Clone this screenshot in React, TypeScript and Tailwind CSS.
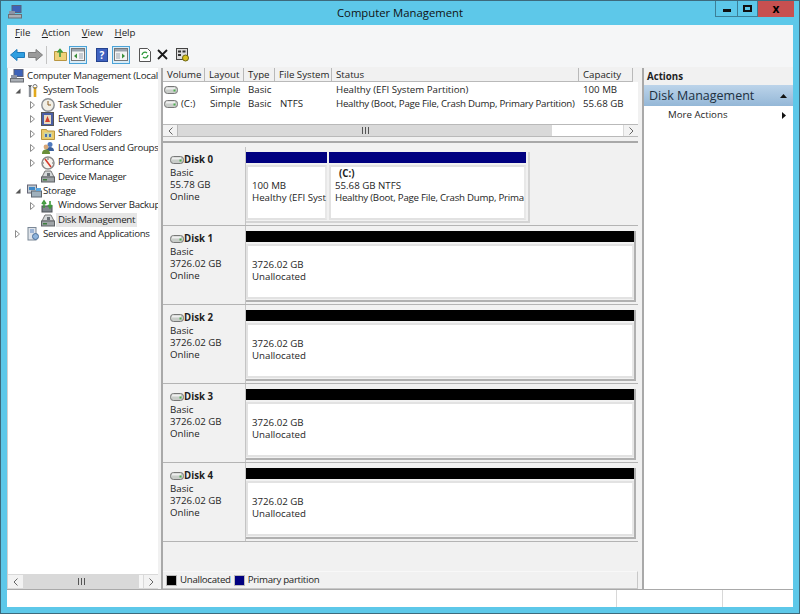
import type { ReactNode } from "react";

const TREE = [
  { label: "System Tools", level: 1, arrow: "open", icon: "tools" },
  { label: "Task Scheduler", level: 2, arrow: "closed", icon: "clock" },
  { label: "Event Viewer", level: 2, arrow: "closed", icon: "event" },
  { label: "Shared Folders", level: 2, arrow: "closed", icon: "folder" },
  { label: "Local Users and Groups", level: 2, arrow: "closed", icon: "users" },
  { label: "Performance", level: 2, arrow: "closed", icon: "perf" },
  { label: "Device Manager", level: 2, arrow: "", icon: "device" },
  { label: "Storage", level: 1, arrow: "open", icon: "storage" },
  { label: "Windows Server Backup", level: 2, arrow: "closed", icon: "backup" },
  { label: "Disk Management", level: 2, arrow: "", icon: "device", selected: true },
  { label: "Services and Applications", level: 1, arrow: "closed", icon: "services" },
];

const COLUMNS = [
  { label: "Volume", w: "w-[42px]" },
  { label: "Layout", w: "w-[39px]" },
  { label: "Type", w: "w-[31px]" },
  { label: "File System", w: "w-[57px]" },
  { label: "Status", w: "w-[247px]" },
  { label: "Capacity", w: "w-[54px]" },
];

const VOLUMES = [
  { name: "", layout: "Simple", type: "Basic", fs: "", status: "Healthy (EFI System Partition)", statusClass: "", capacity: "100 MB" },
  { name: "(C:)", layout: "Simple", type: "Basic", fs: "NTFS", status: "Healthy (Boot, Page File, Crash Dump, Primary Partition)", statusClass: "tracking-[-0.24px]", capacity: "55.68 GB" },
];

function DiskIcon() {
  return (
    <svg width="14" height="8" viewBox="0 0 14 8" className="shrink-0">
      <rect x="0.5" y="0.5" width="13" height="7" rx="3" fill="#c9cdc9" stroke="#777" />
      <rect x="2" y="1.5" width="9" height="2" fill="#eee" />
      <rect x="9.5" y="3.5" width="2" height="2" fill="#4caf50" />
    </svg>
  );
}

function TreeIcon({ name }: { name: string }) {
  const box = "shrink-0";
  if (name === "computer")
    return (
      <svg width="15" height="14" viewBox="0 0 15 14" className={box}>
        <rect x="4" y="0.5" width="9" height="7" fill="#3d62b8" stroke="#59617a" />
        <rect x="1" y="6" width="6" height="3" fill="#8b93a6" />
        <rect x="0.5" y="9.5" width="13" height="3.5" fill="#a9aeb5" stroke="#6b6f75" />
      </svg>
    );
  if (name === "tools")
    return (
      <svg width="12" height="14" viewBox="0 0 12 14" className={box}>
        <path d="M3 1v12" stroke="#8a8f96" strokeWidth="2.4" />
        <path d="M1.5 1l1.5 2 1.5-2" stroke="#555" fill="none" />
        <path d="M8 3v10" stroke="#e2a91c" strokeWidth="2.6" />
        <circle cx="8" cy="2.5" r="2" fill="none" stroke="#777" />
      </svg>
    );
  if (name === "clock")
    return (
      <svg width="14" height="14" viewBox="0 0 14 14" className={box}>
        <circle cx="7" cy="7" r="6.2" fill="#f1efe6" stroke="#8b8f94" strokeWidth="1.4" />
        <path d="M7 3v4h3" stroke="#8a5a20" fill="none" />
      </svg>
    );
  if (name === "event")
    return (
      <svg width="13" height="14" viewBox="0 0 13 14" className={box}>
        <rect x="0.5" y="0.5" width="12" height="13" fill="#4b5fa5" stroke="#555" />
        <rect x="3" y="3" width="7" height="9" fill="#e9dcc0" />
        <path d="M6.5 4l2.5 6h-5z" fill="#d6402b" />
      </svg>
    );
  if (name === "folder")
    return (
      <svg width="14" height="13" viewBox="0 0 14 13" className={box}>
        <path d="M0.5 2.5h5l1 1.5h7v8.5h-13z" fill="#eccb6b" stroke="#b8963f" />
        <rect x="3" y="5.5" width="8" height="5" fill="#c9d6a8" />
        <rect x="4" y="7" width="2" height="3" fill="#4a6fb0" />
        <rect x="8" y="7" width="2" height="3" fill="#4a6fb0" />
      </svg>
    );
  if (name === "users")
    return (
      <svg width="14" height="14" viewBox="0 0 14 14" className={box}>
        <circle cx="9" cy="3.5" r="2.5" fill="#4e79bd" />
        <path d="M5 10c0-3 2-4 4-4s4 1 4 4z" fill="#3a5f9a" />
        <circle cx="5" cy="6" r="2.4" fill="#d8a878" />
        <path d="M1 13c0-3.5 2-4.5 4-4.5s4 1 4 4.5z" fill="#6a8f3a" />
      </svg>
    );
  if (name === "perf")
    return (
      <svg width="14" height="14" viewBox="0 0 14 14" className={box}>
        <circle cx="7" cy="7" r="6" fill="#f7f4ee" stroke="#8a8a8a" strokeWidth="1.5" />
        <path d="M4 3l6 8" stroke="#d63a2b" strokeWidth="1.6" />
        <path d="M7 2v2M3 7H2M12 7h-1" stroke="#666" />
      </svg>
    );
  if (name === "device")
    return (
      <svg width="14" height="13" viewBox="0 0 14 13" className={box}>
        <path d="M4 1h6l3 6H1z" fill="#d5d8d9" stroke="#777" />
        <rect x="0.5" y="7" width="13" height="5" fill="#9ea3a6" stroke="#5d6165" />
        <rect x="2" y="9" width="4" height="1.5" fill="#3c7d3c" />
        <path d="M6 3h3v3H6z" fill="#6a7076" />
      </svg>
    );
  if (name === "storage")
    return (
      <svg width="15" height="14" viewBox="0 0 15 14" className={box}>
        <rect x="0.5" y="1" width="9" height="8" fill="#c2cbd2" stroke="#667" />
        <rect x="2" y="3" width="6" height="3" fill="#3f89c8" />
        <rect x="4.5" y="7" width="10" height="6" fill="#9fb0bc" stroke="#5c6670" />
        <rect x="9" y="4" width="5" height="3" fill="#5aa6de" />
      </svg>
    );
  if (name === "backup")
    return (
      <svg width="13" height="14" viewBox="0 0 13 14" className={box}>
        <rect x="1" y="7" width="10" height="6" fill="#7e858b" stroke="#4c5156" />
        <path d="M3 9V4M1 5l2-3 2 3" stroke="#3f9a3c" strokeWidth="1.6" fill="none" />
        <path d="M9 2v6M7 6l2 3 2-3" stroke="#3f9a3c" strokeWidth="1.6" fill="none" />
      </svg>
    );
  return (
    <svg width="13" height="14" viewBox="0 0 13 14" className={box}>
      <rect x="1" y="0.5" width="8" height="12.5" fill="#dfe4ea" stroke="#7a8796" />
      <path d="M3 3h4M3 5h4" stroke="#5b86c4" />
      <circle cx="8.5" cy="9.5" r="3" fill="#8fb4dc" stroke="#4c6f99" />
    </svg>
  );
}

function Arrow({ kind }: { kind: string }) {
  if (kind === "open")
    return (
      <svg width="6" height="6" viewBox="0 0 6 6" className="shrink-0">
        <path d="M5.5 0.5v5h-5z" fill="#555" />
      </svg>
    );
  if (kind === "closed")
    return (
      <svg width="5" height="8" viewBox="0 0 5 8" className="shrink-0">
        <path d="M0.5 0.5l4 3.5-4 3.5z" fill="#fff" stroke="#8c8c8c" />
      </svg>
    );
  return null;
}

function TreeRow({ item }: { item: (typeof TREE)[number] }) {
  return (
    <div className="flex h-[14.4px] items-center tracking-[-0.3px]">
      <div className={item.level === 1 ? "flex w-[19px] shrink-0 pl-[7px]" : "flex w-[33px] shrink-0 pl-[22px]"}>
        <Arrow kind={item.arrow} />
      </div>
      <div className={item.level === 1 ? "flex w-[15px] shrink-0 items-center" : "flex w-[16px] shrink-0 items-center"}>
        <TreeIcon name={item.icon} />
      </div>
      <span className={item.selected ? "-ml-[1px] whitespace-nowrap bg-[#e6e6e6] px-[2px]" : "whitespace-nowrap pl-[1px]"}>
        {item.label}
      </span>
    </div>
  );
}

function ScrollBtn({ dir, className = "" }: { dir: "l" | "r"; className?: string }) {
  return (
    <div className={`flex h-full w-[15px] shrink-0 items-center justify-center bg-[#f2f2f2] ${className}`}>
      <svg width="5" height="8" viewBox="0 0 5 8">
        <path d={dir === "l" ? "M4.5 0.5L1 4l3.5 3.5" : "M0.5 0.5L4 4 0.5 7.5"} fill="none" stroke="#666" />
      </svg>
    </div>
  );
}

function Grip() {
  return (
    <div className="flex gap-[1px]">
      <div className="h-[7px] w-[1px] bg-[#555]" />
      <div className="ml-[1px] h-[7px] w-[1px] bg-[#555]" />
      <div className="ml-[1px] h-[7px] w-[1px] bg-[#555]" />
    </div>
  );
}

function Partition({ width, color, children }: { width: string; color: string; children: ReactNode }) {
  return (
    <div className={`flex h-full flex-col ${width}`}>
      <div className={`h-[11px] shrink-0 ${color}`} />
      <div className="mt-[2px] flex flex-1 flex-col justify-end border-2 border-[#e2e2e2] border-r-[#e8e8e8] bg-white pb-[14px] pl-[4px] leading-[12px]">
        {children}
      </div>
    </div>
  );
}

function DiskRow({ name, size, children }: { name: string; size: string; children: ReactNode }) {
  return (
    <div className="flex h-[79px] shrink-0 border-b border-[#b4b4b4]">
      <div className="w-[83px] shrink-0 border-r border-[#c4c4c4] pl-[7px] pt-[7px] leading-[12px]">
        <div className="flex items-center font-bold">
          <DiskIcon />
          <span>{name}</span>
        </div>
        <div className="mt-[1px]">Basic</div>
        <div>{size}</div>
        <div>Online</div>
      </div>
      <div className="flex-1 pb-[2px] pt-[5px]">{children}</div>
    </div>
  );
}

function UnallocatedDisk({ name }: { name: string }) {
  return (
    <DiskRow name={name} size="3726.02 GB">
      <div className="h-full w-[390px] border-b-2 border-r-2 border-[#b0b0b0] pb-[1px]">
        <Partition width="w-full" color="bg-black">
          <div>3726.02 GB</div>
          <div>Unallocated</div>
        </Partition>
      </div>
    </DiskRow>
  );
}

function ToolBtn({ children, active, className = "" }: { children: ReactNode; active?: boolean; className?: string }) {
  return (
    <div
      className={`flex h-[18px] shrink-0 items-center justify-center ${
        active ? "w-[18px] border border-[#4aa3d8] bg-[#d9ecf7]" : ""
      } ${className}`}
    >
      {children}
    </div>
  );
}

function PaneGlyph({ side }: { side: "l" | "r" }) {
  return (
    <svg width="14" height="13" viewBox="0 0 14 13">
      <rect x="0.5" y="0.5" width="13" height="12" fill="#f4f4f4" stroke="#777" />
      <rect x="1" y="1" width="12" height="2.5" fill="#9aa3ad" />
      <rect x={side === "l" ? 8 : 2} y="5" width="4" height="6" fill="#c5cbd1" />
      <path d={side === "l" ? "M6 5.5v5L3 8z" : "M8 5.5v5L11 8z"} fill="#3a8f3a" />
    </svg>
  );
}

export default function App() {
  return (
    <div className="flex h-[614px] w-[800px] flex-col overflow-hidden border border-[#3d6a7c] bg-[#5dc8e9] text-[9.7px] text-[#1e1e1e] [font-family:'Open_Sans',sans-serif]">
      {/* title bar */}
      <div className="flex h-[24px] shrink-0">
        <div className="w-[84px] pl-[7px] pt-[4px]">
          <TreeIcon name="computer" />
        </div>
        <div className="flex-1 pt-[4px] text-center text-[11.3px] text-[#111]">Computer Management</div>
        <div className="flex h-[16px] w-[84px]">
          <div className="flex w-[22px] items-center justify-center border border-t-0 border-r-0 border-[#3c7f96]">
            <div className="mt-[3px] h-[3px] w-[8px] bg-[#111]" />
          </div>
          <div className="flex w-[21px] items-center justify-center border border-t-0 border-[#3c7f96]">
            <div className="h-[7px] w-[9px] border-2 border-[#111]" />
          </div>
          <div className="flex w-[36px] items-center justify-center bg-[#c75050] text-[12px] font-bold leading-none text-black">x</div>
        </div>
      </div>

      <div className="mx-[6px] mb-[6px] flex min-h-0 flex-1 flex-col bg-[#f1f1f1]">
        {/* menu */}
        <div className="flex h-[17px] shrink-0 items-center gap-[11.5px] bg-[#f5f6f7] pl-[8px]">
          {["File", "Action", "View", "Help"].map((m) => (
            <span key={m}>
              <span className="underline">{m[0]}</span>
              {m.slice(1)}
            </span>
          ))}
        </div>

        {/* toolbar */}
        <div className="flex h-[25px] shrink-0 items-center bg-[#f5f6f7] pl-[3px]">
          <ToolBtn>
            <svg width="15" height="12" viewBox="0 0 15 12">
              <path d="M7 0.5L0.5 6 7 11.5V8.5h7.5v-5H7z" fill="#2f9fe0" stroke="#1f78b8" />
            </svg>
          </ToolBtn>
          <ToolBtn className="ml-[3px]">
            <svg width="15" height="12" viewBox="0 0 15 12">
              <path d="M8 0.5L14.5 6 8 11.5V8.5H0.5v-5H8z" fill="#9a9a9a" stroke="#7e7e7e" />
            </svg>
          </ToolBtn>
          <div className="ml-[3px] h-[18px] w-[1px] bg-[#c4c4c4]" />
          <ToolBtn className="ml-[7px]">
            <svg width="13" height="13" viewBox="0 0 13 13">
              <path d="M0.5 3.5h4l1 1h7v8h-12z" fill="#efd27a" stroke="#b99640" />
              <path d="M6 9V3M3.5 4.5L6 1.5l2.5 3" stroke="#3c9a3c" strokeWidth="1.6" fill="none" />
            </svg>
          </ToolBtn>
          <ToolBtn active className="ml-[2px]">
            <PaneGlyph side="l" />
          </ToolBtn>
          <ToolBtn className="ml-[9px]">
            <div className="flex h-[14px] w-[12px] items-center justify-center border border-[#24438f] bg-[#3f62c0] text-[10px] font-bold leading-none text-white">?</div>
          </ToolBtn>
          <ToolBtn active className="ml-[4px]">
            <PaneGlyph side="r" />
          </ToolBtn>
          <ToolBtn className="ml-[9px]">
            <svg width="12" height="14" viewBox="0 0 12 14">
              <path d="M0.5 0.5h8l3 3v10h-11z" fill="#fff" stroke="#555" />
              <path d="M3 7a3 3 0 0 1 5-2M9 7a3 3 0 0 1-5 2" stroke="#2f9a3c" strokeWidth="1.3" fill="none" />
            </svg>
          </ToolBtn>
          <ToolBtn className="ml-[6px]">
            <svg width="11" height="11" viewBox="0 0 11 11">
              <path d="M1 1l9 9M10 1l-9 9" stroke="#1a1a1a" strokeWidth="1.8" />
            </svg>
          </ToolBtn>
          <ToolBtn className="ml-[8px]">
            <svg width="13" height="14" viewBox="0 0 13 14">
              <rect x="0.5" y="0.5" width="11" height="11" fill="#dcdcdc" stroke="#444" />
              <rect x="2" y="2.5" width="3" height="2" fill="#333" />
              <rect x="6.5" y="2.5" width="3" height="2" fill="#333" />
              <rect x="2" y="6" width="3" height="2" fill="#333" />
              <circle cx="9.5" cy="10" r="3" fill="#d9c21f" stroke="#6b6310" />
            </svg>
          </ToolBtn>
        </div>

        {/* panes */}
        <div className="mt-[1px] flex min-h-0 flex-1">
          {/* tree */}
          <div className="flex w-[151px] shrink-0 flex-col border-l border-[#d0d0d0] bg-white">
            <div className="min-h-0 flex-1 overflow-hidden pt-[1px]">
              <div className="flex h-[14.4px] items-center pl-[2px]">
                <TreeIcon name="computer" />
                <span className="whitespace-nowrap pl-[2px] tracking-[-0.22px]">Computer Management (Local</span>
              </div>
              {TREE.map((item) => (
                <TreeRow key={item.label} item={item} />
              ))}
            </div>
            <div className="flex h-[15px] shrink-0 border-y border-[#d9d9d9] bg-[#f5f5f5]">
              <ScrollBtn dir="l" />
              <div className="flex w-[116px] items-center justify-center bg-[#d9d9d9]">
                <Grip />
              </div>
              <div className="w-[4px]" />
              <ScrollBtn dir="r" className="border-l border-[#d9d9d9]" />
            </div>
          </div>

          {/* middle */}
          <div className="ml-[3px] flex w-[477px] shrink-0 flex-col border-l-2 border-[#a9a9a9]">
            <div className="flex h-[14px] shrink-0 bg-[#f1f1f1]">
              {COLUMNS.map((c) => (
                <div key={c.label} className={`${c.w} flex items-center whitespace-nowrap border-b border-r border-[#b9b9b9] pl-[4px] pt-[2px]`}>
                  {c.label}
                </div>
              ))}
            </div>
            <div className="h-[42px] shrink-0 bg-white pt-[1px]">
              {VOLUMES.map((v) => (
                <div key={v.status} className="flex h-[14px] items-center whitespace-nowrap">
                  <div className="flex w-[42px] items-center gap-[3px] pl-[1px]">
                    <DiskIcon />
                    <span>{v.name}</span>
                  </div>
                  <div className="w-[39px] pl-[5px]">{v.layout}</div>
                  <div className="w-[31px] pl-[4px]">{v.type}</div>
                  <div className="w-[57px] pl-[5px]">{v.fs}</div>
                  <div className={`w-[247px] pl-[4px] ${v.statusClass}`}>{v.status}</div>
                  <div className="w-[54px] pl-[4px]">{v.capacity}</div>
                </div>
              ))}
            </div>
            <div className="flex h-[13px] shrink-0 border-y border-[#b9b9b9] bg-white">
              <ScrollBtn dir="l" className="border-r border-[#b9b9b9]" />
              <div className="flex w-[374px] items-center justify-center bg-[#d9d9d9]">
                <Grip />
              </div>
              <div className="flex-1" />
              <ScrollBtn dir="r" className="border-l border-[#d9d9d9]" />
            </div>
            <div className="h-[6px] shrink-0 border-b-2 border-[#a9a9a9] bg-[#f1f1f1]" />

            <div className="flex min-h-0 flex-1 flex-col pt-[4px]">
              <DiskRow name="Disk 0" size="55.78 GB">
                <div className="flex h-full w-[284px] gap-[2px] border-b-2 border-r-2 border-[#d4d4d4] pb-[1px]">
                  <Partition width="w-[81px]" color="bg-[#000080]">
                    <div>100 MB</div>
                    <div className="whitespace-nowrap">Healthy (EFI Syst</div>
                  </Partition>
                  <Partition width="w-[197px]" color="bg-[#000080]">
                    <div className="pl-[4px] font-bold">(C:)</div>
                    <div>55.68 GB NTFS</div>
                    <div className="whitespace-nowrap tracking-[-0.24px]">Healthy (Boot, Page File, Crash Dump, Prima</div>
                  </Partition>
                </div>
              </DiskRow>
              <UnallocatedDisk name="Disk 1" />
              <UnallocatedDisk name="Disk 2" />
              <UnallocatedDisk name="Disk 3" />
              <UnallocatedDisk name="Disk 4" />
              <div className="flex-1" />
              <div className="flex h-[18px] shrink-0 items-center border-b border-r border-t border-[#c8c8c8] border-t-[#f8f8f8] pl-[4px] tracking-[-0.3px]">
                <div className="h-[9px] w-[9px] bg-black outline outline-1 outline-[#bbb]" />
                <span className="ml-[4px]">Unallocated</span>
                <div className="ml-[4px] h-[9px] w-[9px] bg-[#000080] outline outline-1 outline-[#bbb]" />
                <span className="ml-[4px]">Primary partition</span>
              </div>
            </div>
          </div>

          {/* actions */}
          <div className="ml-[4px] flex flex-1 flex-col border-l-2 border-[#a9a9a9] bg-white">
            <div className="flex h-[17px] shrink-0 items-center bg-[#f1f1f1] pl-[3px] pt-[1px] font-bold">Actions</div>
            <div className="flex h-[21px] shrink-0 items-center justify-between bg-gradient-to-b from-[#bcd4ea] to-[#94b7d7] pl-[5px] pr-[6px] text-[12.5px] text-[#20303f]">
              <span className="pt-[2px]">Disk Management</span>
              <svg width="7" height="4" viewBox="0 0 7 4">
                <path d="M0 4l3.5-4L7 4z" fill="#111" />
              </svg>
            </div>
            <div className="flex h-[18px] shrink-0 items-center justify-between pl-[24px] pr-[7px]">
              <span>More Actions</span>
              <svg width="4" height="7" viewBox="0 0 4 7">
                <path d="M0 0l4 3.5L0 7z" fill="#111" />
              </svg>
            </div>
          </div>
        </div>

        {/* status bar */}
        <div className="flex h-[18px] shrink-0 border-t border-[#a9a9a9] bg-white">
          <div className="w-[610px] border-r border-[#d8d8d8]" />
          <div className="w-[106px] border-r border-[#d8d8d8]" />
          <div className="flex-1" />
        </div>
      </div>
    </div>
  );
}
